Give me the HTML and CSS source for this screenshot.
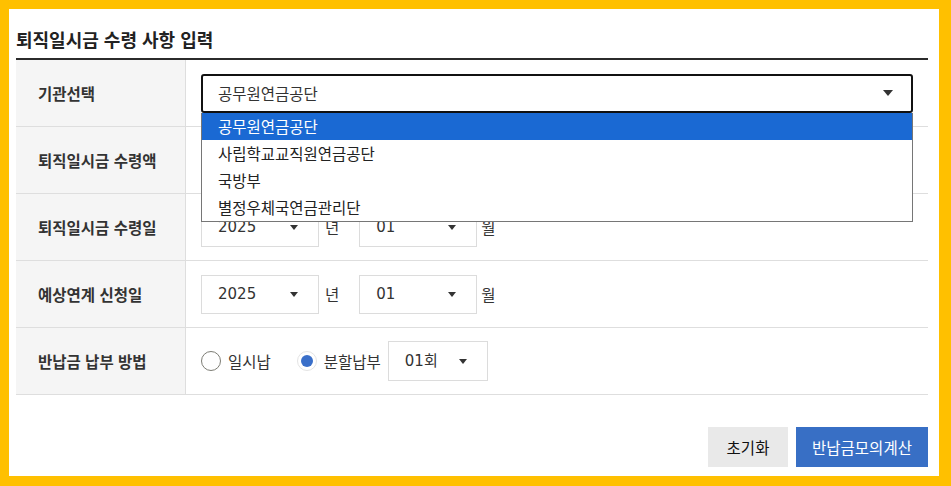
FILE: index.html
```html
<!DOCTYPE html>
<html lang="ko">
<head>
<meta charset="utf-8">
<title>퇴직일시금 수령 사항 입력</title>
<link rel="stylesheet" href="styles.css">
</head>
<body>
<div class="frame">
  <h2 class="title">퇴직일시금 수령 사항 입력</h2>
  <div class="table">
    <div class="row">
      <div class="label">기관선택</div>
      <div class="cell">
        <div class="combo">
          <div class="select select-focus select-wide">
            <span class="ko">공무원연금공단</span><i class="arrow arrow-lg"></i>
          </div>
          <ul class="listbox">
            <li class="option active">공무원연금공단</li>
            <li class="option">사립학교교직원연금공단</li>
            <li class="option">국방부</li>
            <li class="option">별정우체국연금관리단</li>
          </ul>
        </div>
      </div>
    </div>
    <div class="row">
      <div class="label">퇴직일시금 수령액</div>
      <div class="cell">
        <div class="input"></div><span class="unit">원</span>
      </div>
    </div>
    <div class="row">
      <div class="label">퇴직일시금 수령일</div>
      <div class="cell">
        <div class="select select-ym"><span>2025</span><i class="arrow"></i></div>
        <span class="unit unit-year">년</span>
        <div class="select select-ym"><span>01</span><i class="arrow"></i></div>
        <span class="unit unit-month">월</span>
      </div>
    </div>
    <div class="row">
      <div class="label">예상연계 신청일</div>
      <div class="cell">
        <div class="select select-ym"><span>2025</span><i class="arrow"></i></div>
        <span class="unit unit-year">년</span>
        <div class="select select-ym"><span>01</span><i class="arrow"></i></div>
        <span class="unit unit-month">월</span>
      </div>
    </div>
    <div class="row">
      <div class="label">반납금 납부 방법</div>
      <div class="cell">
        <label class="radio"><span class="dot"></span><span class="radio-text">일시납</span></label>
        <label class="radio radio-on"><span class="dot"></span><span class="radio-text">분할납부</span></label>
        <div class="select select-count"><span>01회</span><i class="arrow"></i></div>
      </div>
    </div>
  </div>
  <div class="actions">
    <button class="btn btn-reset">초기화</button>
    <button class="btn btn-calc">반납금모의계산</button>
  </div>
</div>
</body>
</html>
```
FILE: styles.css
```css
* { box-sizing: border-box; }
html, body { margin: 0; padding: 0; }
body {
  background: #ffc000;
  width: 951px;
  height: 486px;
  overflow: hidden;
  font-family: "DejaVu Sans", "Noto Sans CJK KR", sans-serif;
  color: #333;
  font-size: 15px;
}
.frame {
  margin: 9px 12px 10px 9px;
  width: 930px;
  height: 467px;
  background: #fff;
  padding: 0 11px 0 7px;
}
.title {
  margin: 0;
  padding: 18px 0 7px;
  font-family: "Noto Sans CJK KR", sans-serif;
  font-size: 18px;
  line-height: 24px;
  font-weight: 700;
  color: #222;
}
.table {
  border-top: 2px solid #2b2b2b;
}
.row {
  display: grid;
  grid-template-columns: 170px 1fr;
  height: 67px;
  border-bottom: 1px solid #dedede;
}
.label {
  background: #f5f5f5;
  border-right: 1px solid #dedede;
  display: flex;
  align-items: center;
  padding-left: 22px;
  font-weight: 700;
  font-size: 15.5px;
  color: #333;
  font-family: "Noto Sans CJK KR", sans-serif;
}
.cell {
  display: flex;
  align-items: center;
  padding: 0 15px;
}
.combo {
  position: relative;
  width: 712px;
}
.select {
  display: flex;
  align-items: center;
  justify-content: space-between;
  height: 39px;
  border: 1px solid #dcdcdc;
  background: #fff;
  padding: 0 20px 0 16px;
  font-size: 15px;
  line-height: 20px;
  color: #333;
}
.ko { font-family: "Noto Sans CJK KR", sans-serif; font-size: 15.5px; }
.select-focus {
  border: 2px solid #111;
  border-radius: 3px;
  padding: 0 18px 0 15px;
}
.select-wide { width: 712px; }
.select-ym { width: 118px; }
.select-count { width: 100px; height: 40px; margin-left: 7px; }
.arrow {
  display: block;
  width: 0;
  height: 0;
  border-left: 4.5px solid transparent;
  border-right: 4.5px solid transparent;
  border-top: 5px solid #333;
}
.arrow-lg {
  border-left-width: 5px;
  border-right-width: 5px;
  border-top-width: 6px;
}
.listbox {
  position: absolute;
  left: 0;
  top: 39px;
  width: 712px;
  margin: 0;
  padding: 0;
  list-style: none;
  background: #fff;
  border: 1px solid #767676;
  border-top: none;
  z-index: 5;
}
.option {
  height: 27px;
  line-height: 27px;
  padding-left: 16px;
  font-size: 15.5px;
  font-family: "Noto Sans CJK KR", sans-serif;
  color: #222;
}
.option.active {
  background: #1a69d3;
  color: #fff;
}
.input {
  width: 300px;
  height: 39px;
  border: 1px solid #dcdcdc;
}
.unit { font-size: 15.5px; color: #333; font-family: "Noto Sans CJK KR", sans-serif; }
.input + .unit { margin-left: 6px; }
.unit-year { margin: 0 20px 0 6px; }
.unit-month { margin-left: 4px; }
.radio {
  display: flex;
  align-items: center;
  font-size: 15.5px;
  color: #333;
}
.radio + .radio { margin-left: 26px; }
.dot {
  width: 20px;
  height: 20px;
  border-radius: 50%;
  border: 1px solid #7d7d75;
  background: #fff;
  position: relative;
  flex: none;
}
.radio-on .dot { border-color: #e4e4e4; }
.radio-on .dot::after {
  content: "";
  position: absolute;
  left: 3px;
  top: 3px;
  width: 12px;
  height: 12px;
  border-radius: 50%;
  background: #3a6fc9;
}
.radio-text { margin-left: 7px; font-family: "Noto Sans CJK KR", sans-serif; }
.actions {
  display: flex;
  justify-content: flex-end;
  gap: 8px;
  margin-top: 32px;
}
.btn {
  height: 40px;
  border: none;
  font-family: "Noto Sans CJK KR", sans-serif;
  font-size: 15.5px;
  padding: 0;
  cursor: pointer;
}
.btn-reset { width: 80px; background: #e9e9e9; color: #111; }
.btn-calc { width: 132px; background: #386fc5; color: #fff; }
```
